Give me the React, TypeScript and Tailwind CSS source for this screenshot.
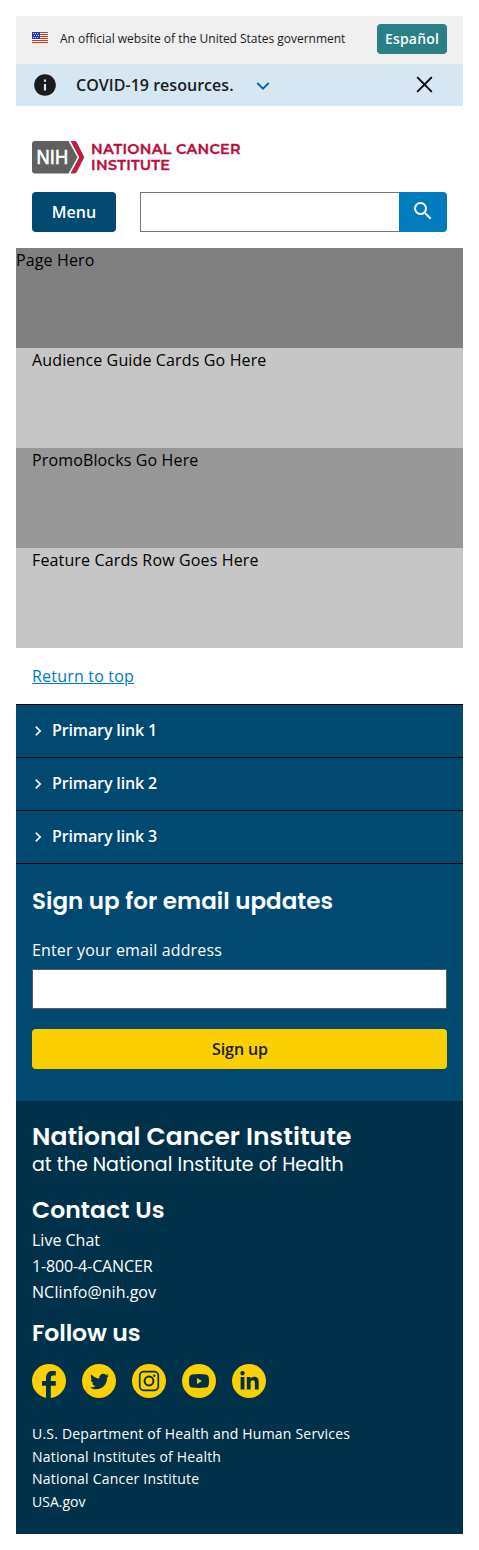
import React from "react";
import { MdInfo, MdSearch, MdNavigateNext } from "react-icons/md";
import { FaTwitter, FaLinkedinIn } from "react-icons/fa";

const heading = "font-['Poppins','Inter',sans-serif] font-semibold";

function Flag() {
  return (
    <svg width="16" height="11" viewBox="0 0 16 11" shapeRendering="crispEdges" className="block shrink-0">
      <rect width="16" height="11" fill="#fff" />
      {[0, 2, 4, 6, 8, 10].map((y) => (
        <rect key={y} y={y} width="16" height="1" fill="#e0320f" />
      ))}
      <rect width="8" height="7" fill="#1f36c7" />
      <g fill="#fff" fillOpacity=".8">
        {[1, 3, 5].map((y) =>
          [1, 3, 5].map((x) => <rect key={`${x}-${y}`} x={y === 3 ? x + 1 : x} y={y} width="1" height="1" />)
        )}
      </g>
    </svg>
  );
}

function Logo() {
  return (
    <svg width="210" height="33" viewBox="0 0 210 33" className="block" role="img">
      <path d="M3 0H36.5L45.5 16.3L36.5 32.4H3Q0 32.4 0 29.4V3Q0 0 3 0Z" fill="#606060" />
      <path d="M38.5 0H42.5Q44 0 44.8 1.3L52.3 16.3L44.8 31Q44 32.4 42.5 32.4H38.5L47.2 16.3Z" fill="#bd1f44" />
      <text x="4.6" y="23.2" textLength="31.5" lengthAdjust="spacingAndGlyphs" fill="#fff" stroke="#fff" strokeWidth=".6" fontSize="19.5" className="font-['Liberation_Sans',sans-serif]">NIH</text>
      <g fill="#bb0e3d" stroke="#bb0e3d" strokeWidth=".35" fontSize="14.4" className="font-['Montserrat','Inter',sans-serif] font-semibold">
        <text x="59" y="13.4" textLength="149.5">NATIONAL CANCER</text>
        <text x="59" y="28.9" textLength="79">INSTITUTE</text>
      </g>
    </svg>
  );
}

function Disc({ children }: { children: React.ReactNode }) {
  return <a className="flex size-[34px] items-center justify-center rounded-full bg-[#fbcf02] text-[#00314a]">{children}</a>;
}

export default function App() {
  return (
    <div className="min-h-[1550px] bg-white p-4 font-['Open_Sans',sans-serif] text-base text-black">
      <div className="flex h-12 items-start bg-[#efefef] px-4 text-[#1b1b1b]">
        <div className="shrink-0 pt-4"><Flag /></div>
        <span className="ml-3 pt-[14px] text-xs leading-[17px] tracking-[-0.02px] whitespace-nowrap">An official website of the United States government</span>
        <button className="mt-2 ml-auto h-[30px] w-[70px] rounded bg-[#298085] text-sm leading-[30px] font-semibold tracking-[0.2px] text-white">Español</button>
      </div>
      <div className="flex h-[42px] items-center bg-[#d5e7f3] pr-[30px] pl-4 text-[#1b1b1b]">
        <MdInfo size={26} />
        <span className="ml-[18px] font-semibold tracking-[0.03px]">COVID-19 resources.</span>
        <svg width="14" height="10" viewBox="0 0 14 10" fill="none" stroke="#0067a3" strokeWidth="1.9" className="mt-0.5 ml-[22px]"><path d="M1.3 2L7 7.6L12.7 2" /></svg>
        <svg width="17" height="17" viewBox="0 0 17 17" stroke="#000" strokeWidth="1.9" className="mb-0.5 ml-auto"><path d="M1.2 1.2L15.8 15.8M15.8 1.2L1.2 15.8" /></svg>
      </div>

      <header className="h-[142px] px-4 pt-[35px]">
        <Logo />
        <div className="mt-[18px] flex h-10">
          <button className="w-[84px] rounded bg-[#004971] font-semibold text-white">Menu</button>
          <input className="ml-6 w-[259px] border border-r-0 border-[#71767a] bg-white" />
          <button className="flex w-12 items-center justify-center rounded-r bg-[#007bbd] pb-0.5 text-white"><MdSearch size={24} /></button>
        </div>
      </header>

      <main className="leading-6 tracking-[0.14px]">
        <div className="h-[100px] bg-[#808080]">Page Hero</div>
        <div className="h-[100px] bg-[#c6c6c6] px-4">Audience Guide Cards Go Here</div>
        <div className="h-[100px] bg-[#979797] px-4">PromoBlocks Go Here</div>
        <div className="h-[100px] bg-[#c6c6c6] px-4">Feature Cards Row Goes Here</div>
      </main>

      <footer>
        <div className="h-14 px-4 pt-4 leading-6 tracking-[0.2px]"><a className="text-[#007bbd] underline">Return to top</a></div>
        <nav className="border-t border-black bg-[#004971] text-white">
          {[1, 2, 3].map((n) => (
            <a key={n} className="flex h-[53px] items-center border-b border-black pl-3 font-semibold tracking-[-0.13px]">
              <MdNavigateNext size={20} />
              <span className="ml-1 pb-0.5">Primary link {n}</span>
            </a>
          ))}
        </nav>
        <section className="h-[237px] bg-[#004971] px-4 pt-[21px] text-white">
          <h2 className={`${heading} text-[23px] leading-8 tracking-[0.04px] whitespace-nowrap`}>Sign up for email updates</h2>
          <label className="mt-[21px] block leading-6 tracking-[0.15px]">Enter your email address</label>
          <input className="mt-[7px] block h-10 w-full border border-[#5c5c5c] bg-white" />
          <button className="mt-5 block h-10 w-full rounded bg-[#fbcf02] pl-px font-semibold tracking-[-0.1px] text-[#1b1b1b]">Sign up</button>
        </section>
        <section className="h-[433px] bg-[#00314a] px-4 pt-5 text-white">
          <h2 className={`${heading} text-[25px] leading-8 tracking-[0.03px] whitespace-nowrap`}>National Cancer Institute</h2>
          <p className="font-['Poppins','Inter',sans-serif] text-[19px] leading-6 whitespace-nowrap">at the National Institute of Health</p>
          <h3 className={`${heading} mt-[17px] text-[23.5px] leading-8 tracking-[0.1px]`}>Contact Us</h3>
          <div className="mt-px leading-[26px]">
            <p>Live Chat</p>
            <p className="tracking-[-0.13px]">1-800-4-CANCER</p>
            <p>NCIinfo@nih.gov</p>
          </div>
          <h3 className={`${heading} mt-3 text-[23.5px] leading-8 tracking-[-0.1px]`}>Follow us</h3>
          <div className="mt-[15px] flex gap-4">
            <Disc>
              <svg width="34" height="34" viewBox="0 0 34 34" fill="currentColor"><path d="M14 34V21.7H10V17H14V14.5C14 9.5 16.3 7 20.2 7H23.8V11.5H21.2C19.4 11.5 18.8 12.5 18.8 14V17H23.8V21.7H18.8V34Z" /></svg>
            </Disc>
            <Disc><FaTwitter size={19} /></Disc>
            <Disc>
              <svg width="34" height="34" viewBox="0 0 34 34" fill="none" stroke="currentColor" strokeWidth="1.7"><rect x="7.7" y="7.7" width="18.6" height="18.6" rx="4" /><circle cx="17" cy="17" r="4.4" strokeWidth="2" /><circle cx="22.2" cy="11.8" r="1.2" fill="currentColor" stroke="none" /></svg>
            </Disc>
            <Disc>
              <svg width="20" height="14" viewBox="0 0 20 14"><path d="M3 .5Q10-.4 17 .5Q19.5.8 19.8 3.5Q20.2 7 19.8 10.5Q19.5 13.2 17 13.5Q10 14.4 3 13.5Q.5 13.2.2 10.5Q-.2 7 .2 3.5Q.5.8 3 .5Z" fill="currentColor" /><path d="M8 4.1L13 7L8 9.9Z" fill="#fbcf02" /></svg>
            </Disc>
            <Disc><FaLinkedinIn size={21} /></Disc>
          </div>
          <div className="mt-[25px] text-sm leading-[22.6px] tracking-[0.21px]">
            <p>U.S. Department of Health and Human Services</p>
            <p>National Institutes of Health</p>
            <p>National Cancer Institute</p>
            <p className="tracking-normal">USA.gov</p>
          </div>
        </section>
      </footer>
    </div>
  );
}
